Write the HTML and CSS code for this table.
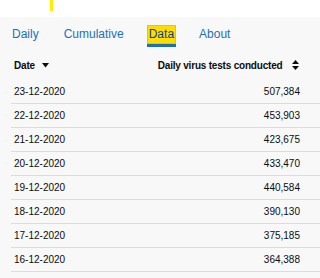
FILE: index.html
```html
<!DOCTYPE html>
<html lang="en">
<head>
<meta charset="utf-8">
<link rel="stylesheet" href="styles.css">
</head>
<body>
<div class="topstrip"><span class="marker"></span></div>
<main class="panel">
  <nav class="tabs">
    <a class="tab">Daily</a>
    <a class="tab">Cumulative</a>
    <a class="tab active">Data</a>
    <a class="tab">About</a>
  </nav>
  <table class="data">
    <thead>
      <tr>
        <th class="c-date">Date <svg class="ico" width="7" height="5" viewBox="0 0 7 5"><path d="M0 0h7L3.5 4.5z" fill="#0b0c0c"/></svg></th>
        <th class="c-num">Daily virus tests conducted <svg class="ico sort" width="7" height="10" viewBox="0 0 7 10"><path d="M3.5 0L7 4H0z M0 6h7L3.5 10z" fill="#0b0c0c"/></svg></th>
      </tr>
    </thead>
    <tbody>
      <tr><td class="c-date">23-12-2020</td><td class="c-num">507,384</td></tr>
      <tr><td class="c-date">22-12-2020</td><td class="c-num">453,903</td></tr>
      <tr><td class="c-date">21-12-2020</td><td class="c-num">423,675</td></tr>
      <tr><td class="c-date">20-12-2020</td><td class="c-num">433,470</td></tr>
      <tr><td class="c-date">19-12-2020</td><td class="c-num">440,584</td></tr>
      <tr><td class="c-date">18-12-2020</td><td class="c-num">390,130</td></tr>
      <tr><td class="c-date">17-12-2020</td><td class="c-num">375,185</td></tr>
      <tr><td class="c-date">16-12-2020</td><td class="c-num">364,388</td></tr>
    </tbody>
  </table>
</main>
</body>
</html>
```
FILE: styles.css
```css
html, body {
  margin: 0;
  padding: 0;
  background: #f8f8f8;
  overflow: hidden;
}
body {
  font-family: "Liberation Sans", Arial, sans-serif;
  color: #0b0c0c;
  width: 320px;
  height: 278px;
}
.topstrip {
  height: 17px;
  background: #ffffff;
  padding-left: 50px;
  box-sizing: border-box;
}
.marker {
  display: block;
  width: 3px;
  height: 11px;
  background: #ffee00;
}
.panel {
  padding-left: 11px;
}
.tabs {
  display: flex;
  align-items: flex-start;
  box-sizing: border-box;
  height: 34px;
  padding-top: 8px;
  font-size: 12px;
  line-height: 14px;
}
.tab {
  color: #1d70b8;
  padding: 2px 1px 0;
  margin-right: 23px;
}
.tab.active {
  background: #ffdd00;
  color: #0b3e8a;
  border-bottom: 3px solid #1d70b8;
  box-shadow: inset 0 0 0 1px #d9c23c;
  padding: 2px 2px 3px;
  margin-left: -1px;
  margin-right: 22px;
}
.data {
  width: 309px;
  border-collapse: collapse;
  font-size: 10px;
  margin-top: 7px;
}
.data th {
  font-weight: bold;
  height: 21px;
  padding: 0 3px;
  vertical-align: top;
  line-height: 13px;
  padding-top: 1px;
  letter-spacing: -0.2px;
}
.data td {
  height: 23px;
  padding: 0 3px;
  border-bottom: 1px solid #dcdcdc;
  vertical-align: middle;
}
.c-date { text-align: left; }
.c-num { text-align: right; padding-right: 20px !important; }
.data th.c-num { padding-right: 21px !important; }
.ico { margin-left: 5px; vertical-align: 1px; }
.ico.sort { vertical-align: -1px; margin-left: 7px; }
```
